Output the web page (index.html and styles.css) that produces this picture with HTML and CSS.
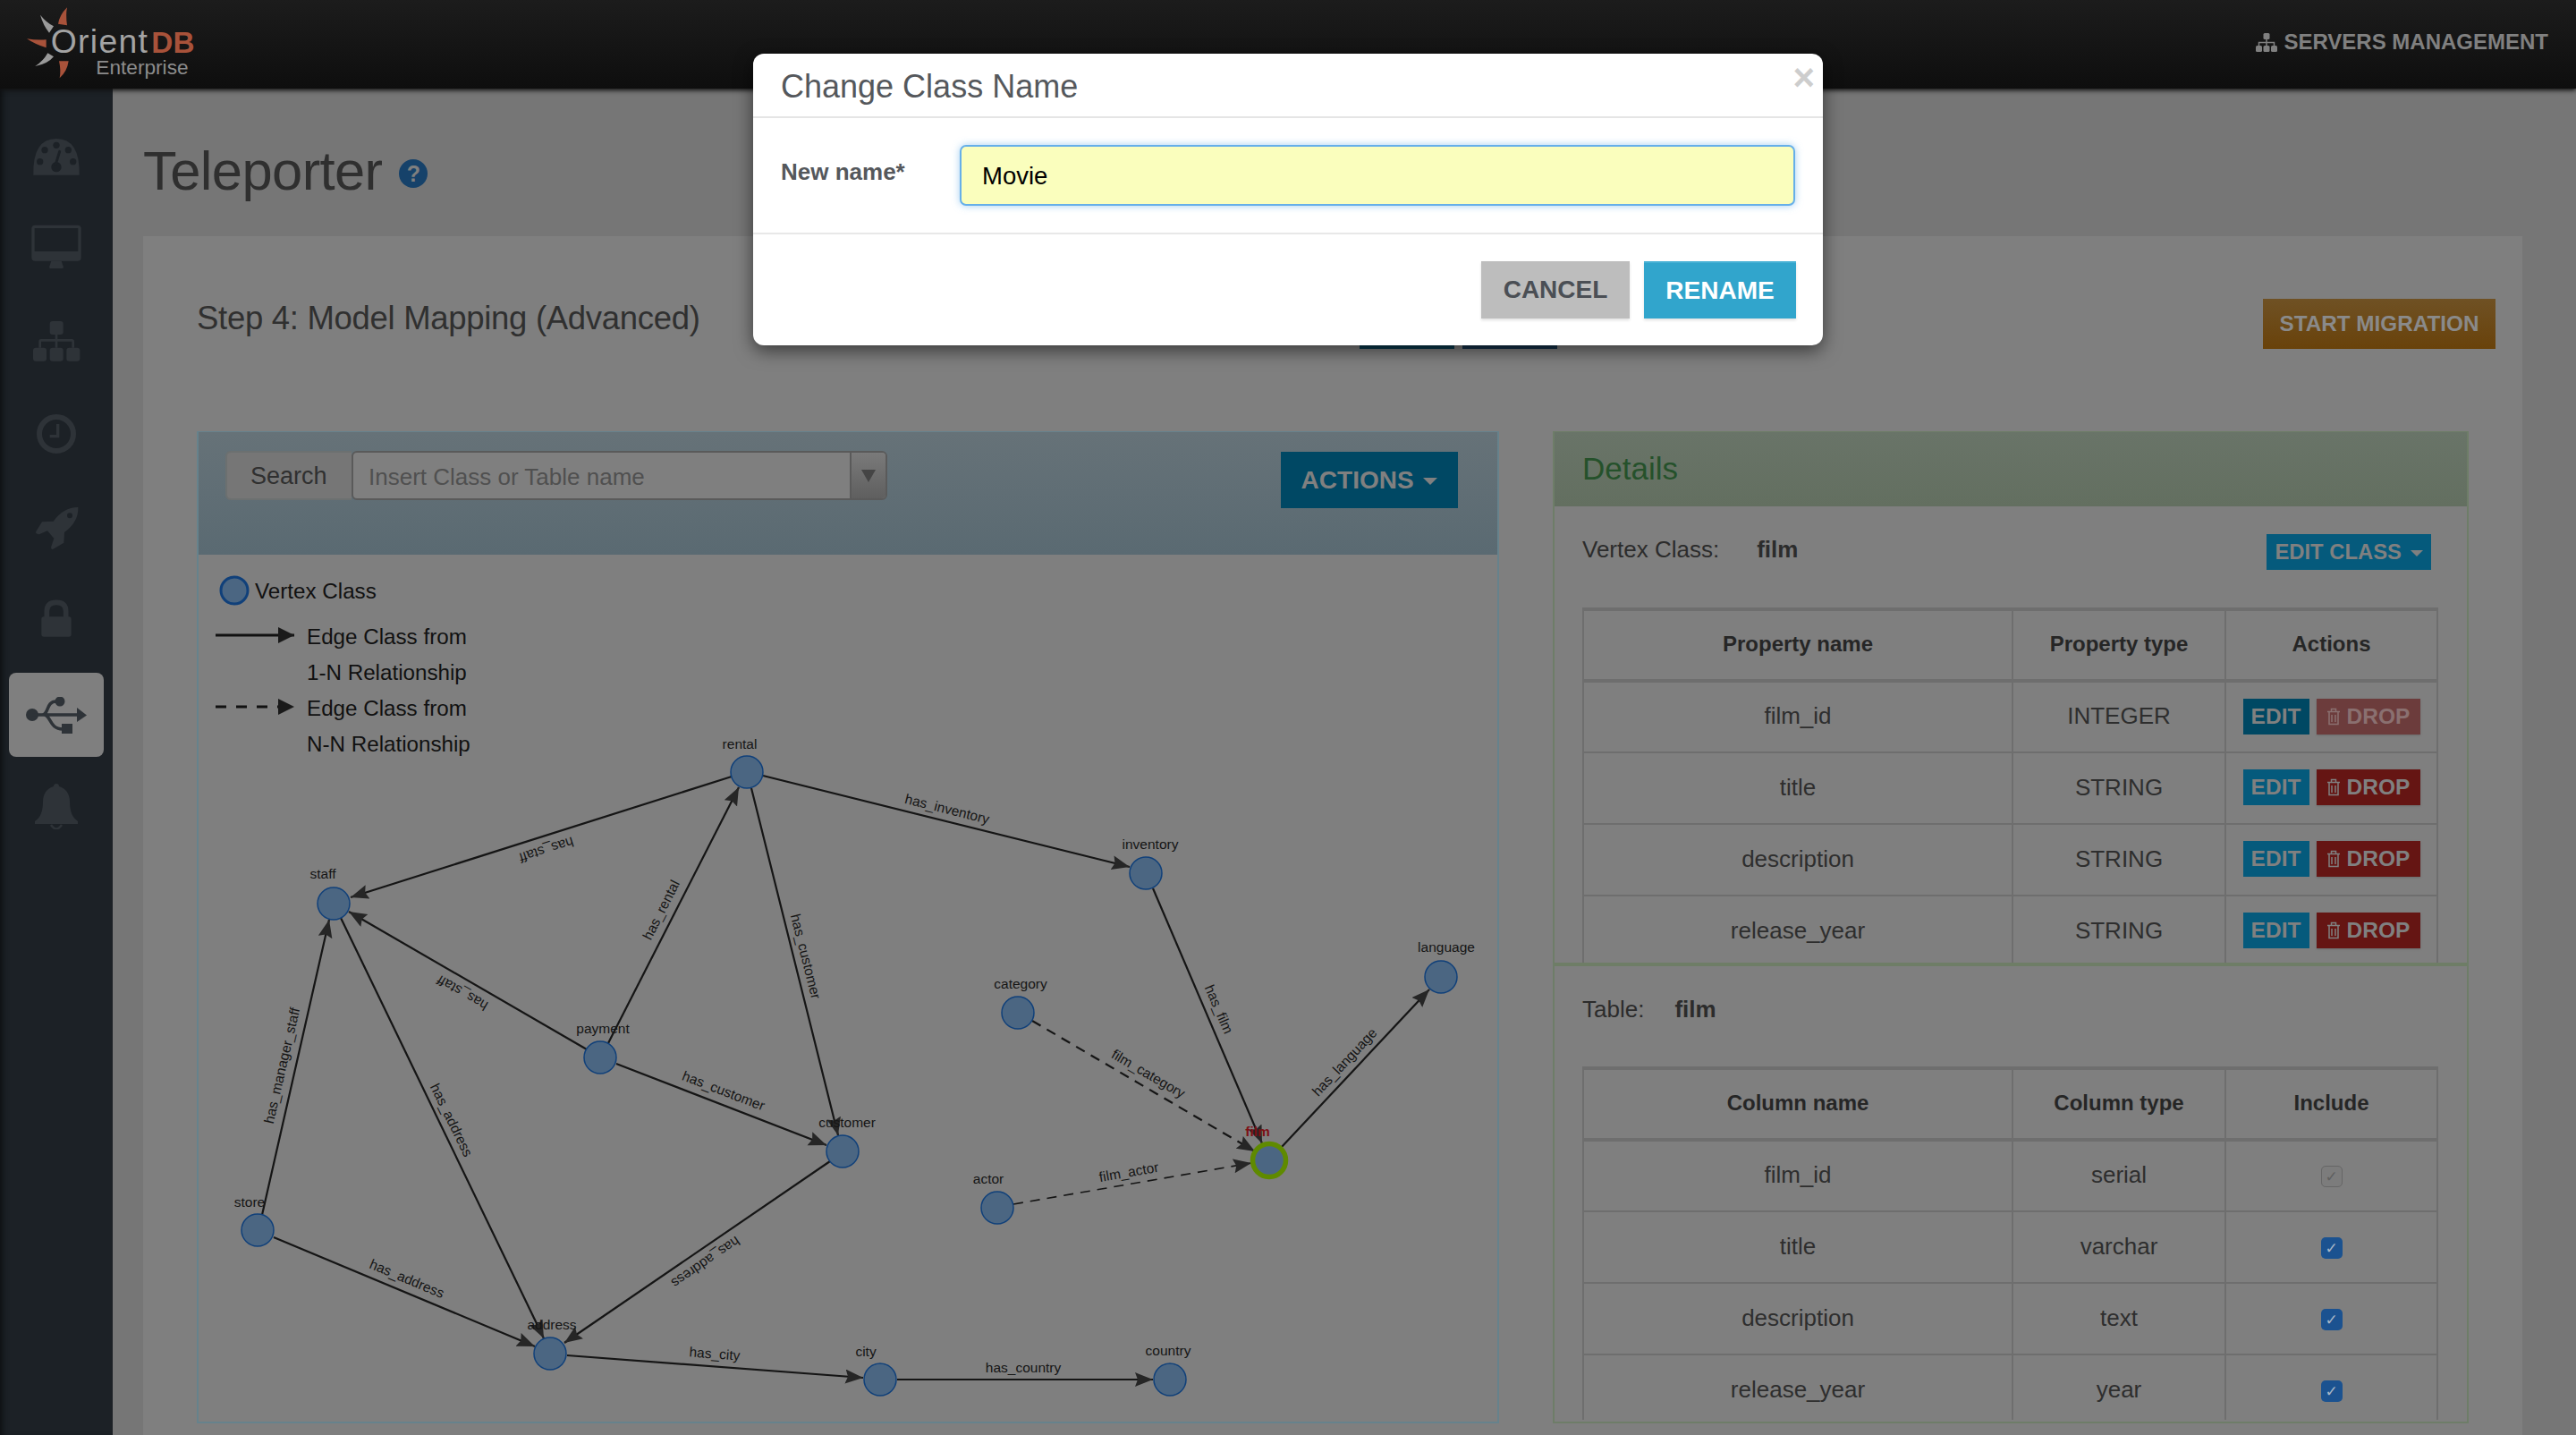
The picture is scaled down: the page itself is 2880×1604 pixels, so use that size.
FILE: index.html
```html
<!DOCTYPE html>
<html lang="en">
<head>
  <meta charset="UTF-8" />
  <title>OrientDB Enterprise - Teleporter</title>
  <link rel="stylesheet" href="styles.css">
</head>
<body>

<header class="topbar">
  <svg class="logo" viewBox="0 0 630 300" width="210" height="100">
    <path class="spoke-o" d="M165 25Q140 50 135 80L165 85Q160 50 165 25Z"/>
    <path class="spoke-w" d="M75 50Q85 85 105 110L120 88Q95 75 75 50Z"/>
    <path class="spoke-o" d="M30 130Q60 150 95 160L95 133Q60 135 30 130Z"/>
    <path class="spoke-w" d="M58 222Q100 215 120 190L100 178Q85 205 58 222Z"/>
    <path class="spoke-o" d="M140 262Q165 240 170 205L138 205Q145 235 140 262Z"/>
    <text class="logo-orient" x="110" y="178">Orient</text>
    <text class="logo-db" x="448" y="178">DB</text>
    <text class="logo-ent" x="262" y="250">Enterprise</text>
  </svg>
  <a class="servers-link">
    <svg viewBox="0 0 24 21" width="24" height="21">
      <rect x="8.500" width="7" height="7" rx="1.500"/><rect y="14" width="7" height="7" rx="1.500"/><rect x="8.500" y="14" width="7" height="7" rx="1.500"/><rect x="17" y="14" width="7" height="7" rx="1.500"/>
      <path d="M12 7v7M3.500 14v-3.500h17V14" fill="none" stroke="#808080" stroke-width="1.500"/>
    </svg>
    SERVERS MANAGEMENT
  </a>
</header>

<div class="layout">
  <nav class="sidebar">
    <a class="nav-item"><svg viewBox="-5 -27 270 270" width="90" height="90">
      <path d="M53 167Q50 45 130 45T207 167Z"/>
      <g class="cut"><circle cx="75" cy="122" r="11"/><circle cx="91" cy="83" r="11"/><circle cx="130" cy="67" r="11"/><circle cx="170" cy="83" r="11"/><circle cx="186" cy="122" r="11"/><circle cx="130" cy="140" r="17"/><path d="M128 130L141 88" stroke="#1c2126" stroke-width="9" stroke-linecap="round"/></g>
    </svg></a>
    <a class="nav-item"><svg viewBox="-5 285 270 270" width="90" height="90">
      <path d="M59 335H201Q213 335 213 347V443Q213 455 201 455H59Q47 455 47 443V347Q47 335 59 335Z"/>
      <rect class="cut" x="57" y="345" width="146" height="78"/>
      <path d="M113 455H147L152 470Q157 480 147 480H113Q103 480 108 470Z"/>
    </svg></a>
    <a class="nav-item"><svg viewBox="-5 597 270 270" width="90" height="90">
      <rect x="108" y="657" width="45" height="45" rx="9"/><rect x="52" y="746" width="45" height="45" rx="9"/><rect x="108" y="746" width="45" height="45" rx="9"/><rect x="164" y="746" width="45" height="45" rx="9"/>
      <path d="M130 702V746M75 746V725Q75 721 79 721H182Q186 721 186 725V746" fill="none" stroke="#2e3338" stroke-width="8"/>
    </svg></a>
    <a class="nav-item"><svg viewBox="-5 -21 270 270" width="90" height="90">
      <circle cx="130" cy="105" r="57" fill="none" stroke="#2e3338" stroke-width="18"/>
      <path d="M135 72V113H108" fill="none" stroke="#2e3338" stroke-width="10"/>
    </svg></a>
    <a class="nav-item"><svg viewBox="-5 291 270 270" width="90" height="90">
      <path d="M203 351Q205 400 157 435L155 470L118 492Q110 490 113 482L122 455L100 430L72 442Q58 440 62 432L82 400L120 398Q155 350 203 351Z"/>
      <circle class="cut" cx="175" cy="379" r="9"/>
    </svg></a>
    <a class="nav-item"><svg viewBox="-5 603 270 270" width="90" height="90">
      <rect x="80" y="718" width="100" height="67" rx="8"/>
      <path d="M98 720V700Q98 670 130 670T162 700V720" fill="none" stroke="#2e3338" stroke-width="17"/>
    </svg></a>
    <a class="nav-item active"><svg viewBox="30 775 68 41" width="68" height="41">
      <circle cx="37" cy="795" r="7"/><circle cx="68" cy="780" r="5.500"/>
      <rect x="70" y="805" width="12" height="11"/>
      <path d="M98 795.500L87 787V803Z"/>
      <path d="M37 795H90M48 795C56 795 52 780 64 780M50 795C58 795 56 811 71 811" fill="none" stroke="#2e3338" stroke-width="3.500"/>
    </svg></a>
    <a class="nav-item bell"><svg viewBox="0 0 48 51" width="48" height="51">
      <path d="M24 0c2 0 3 1 3 3c8 2 12 9 12 17c0 11 3 18 9 22v3H0v-3c6-4 9-11 9-22c0-8 4-15 12-17c0-2 1-3 3-3z"/>
      <path d="M18 46q6 9 12 0" fill="none" stroke="#2e3338" stroke-width="2.500"/>
    </svg></a>
  </nav>

  <main class="content">
    <div class="page-title">
      <h1>Teleporter</h1>
      <span class="help-icon">?</span>
    </div>

    <section class="panel">
      <div class="panel-head">
        <h2>Step 4: Model Mapping (Advanced)</h2>
        <div class="step-buttons">
          <span class="step-btn teal"></span>
          <span class="step-btn navy"></span>
        </div>
        <button class="btn start-btn">START MIGRATION</button>
      </div>

      <div class="columns">
        <!-- graph -->
        <div class="graph-panel">
          <div class="graph-head">
            <div class="search-group">
              <span class="search-addon">Search</span>
              <div class="search-input">
                <span class="placeholder">Insert Class or Table name</span>
                <span class="search-toggle"><i class="caret dark"></i></span>
              </div>
            </div>
            <button class="btn actions-btn">ACTIONS <i class="caret"></i></button>
          </div>

          <svg class="graph" viewBox="222 620 1451 969" width="1451" height="969">
            <defs>
              <marker id="tip" markerUnits="userSpaceOnUse" markerWidth="22" markerHeight="18" refX="20" refY="8" orient="auto">
                <path d="M0 0L20 8L0 16L3 8Z" fill="#262626"/>
              </marker>
              <marker id="tipbig" markerUnits="userSpaceOnUse" markerWidth="20" markerHeight="20" refX="18" refY="9" orient="auto">
                <path d="M0 0L18 9L0 18Z" fill="#1a1a1a"/>
              </marker>
            </defs>

            <!-- legend -->
            <circle class="node legend-node" cx="262" cy="660" r="15"/>
            <text class="legend" x="285" y="669">Vertex Class</text>
            <path class="legend-line" d="M241 710H329" marker-end="url(#tipbig)"/>
            <text class="legend" x="343" y="720">Edge Class from</text>
            <text class="legend" x="343" y="760">1-N Relationship</text>
            <path class="legend-line dash" d="M241 790H329" marker-end="url(#tipbig)"/>
            <text class="legend" x="343" y="800">Edge Class from</text>
            <text class="legend" x="343" y="840">N-N Relationship</text>

            <!-- edges -->
            <g class="edges">
              <path d="M818 868L392 1003" marker-end="url(#tip)"/>
              <path d="M656 1173L390 1019" marker-end="url(#tip)"/>
              <path d="M293 1358L368 1028" marker-end="url(#tip)"/>
              <path d="M381 1026L608 1496" marker-end="url(#tip)"/>
              <path d="M680 1166L826 880" marker-end="url(#tip)"/>
              <path d="M840 881L937 1269" marker-end="url(#tip)"/>
              <path d="M689 1189L924 1280" marker-end="url(#tip)"/>
              <path d="M306 1383L598 1505" marker-end="url(#tip)"/>
              <path d="M928 1298L631 1501" marker-end="url(#tip)"/>
              <path d="M634 1515L965 1540" marker-end="url(#tip)"/>
              <path d="M1003 1542H1289" marker-end="url(#tip)"/>
              <path d="M853 867L1263 969" marker-end="url(#tip)"/>
              <path d="M1289 993L1411 1278" marker-end="url(#tip)"/>
              <path d="M1432 1283L1598 1106" marker-end="url(#tip)"/>
              <path class="dash" d="M1154 1141L1403 1287" marker-end="url(#tip)"/>
              <path class="dash thin" d="M1133 1346L1399 1300" marker-end="url(#tip)"/>
            </g>

            <!-- edge labels -->
            <g class="edge-labels">
              <text transform="translate(611 950) rotate(162.400)">has_staff</text>
              <text transform="translate(517 1110) rotate(210)">has_staff</text>
              <text transform="translate(739 1017) rotate(-63)">has_rental</text>
              <text transform="translate(901 1069) rotate(75.800)">has_customer</text>
              <text transform="translate(315 1191) rotate(-77)">has_manager_staff</text>
              <text transform="translate(505 1252) rotate(64)">has_address</text>
              <text transform="translate(809 1219) rotate(21)">has_customer</text>
              <text transform="translate(455 1429) rotate(22.700)">has_address</text>
              <text transform="translate(789 1411) rotate(145.500)">has_address</text>
              <text transform="translate(799 1513) rotate(4.300)">has_city</text>
              <text transform="translate(1144 1528)">has_country</text>
              <text transform="translate(1059 904) rotate(14)">has_inventory</text>
              <text transform="translate(1363 1128) rotate(66.800)">has_film</text>
              <text transform="translate(1503 1187) rotate(-46.800)">has_language</text>
              <text transform="translate(1284 1200) rotate(30.300)">film_category</text>
              <text transform="translate(1262 1310) rotate(-9.900)">film_actor</text>
            </g>

            <!-- nodes -->
            <circle class="node" cx="835" cy="863" r="18"/>
            <circle class="node" cx="373" cy="1010" r="18"/>
            <circle class="node" cx="671" cy="1182" r="18"/>
            <circle class="node" cx="942" cy="1287" r="18"/>
            <circle class="node" cx="288" cy="1375" r="18"/>
            <circle class="node" cx="615" cy="1513" r="18"/>
            <circle class="node" cx="984" cy="1542" r="18"/>
            <circle class="node" cx="1308" cy="1542" r="18"/>
            <circle class="node" cx="1281" cy="976" r="18"/>
            <circle class="node" cx="1611" cy="1092" r="18"/>
            <circle class="node" cx="1138" cy="1132" r="18"/>
            <circle class="node" cx="1115" cy="1350" r="18"/>
            <circle class="node selected" cx="1419" cy="1297" r="18.500"/>

            <g class="node-labels">
              <text x="827" y="837">rental</text>
              <text x="361" y="982">staff</text>
              <text x="674" y="1155">payment</text>
              <text x="947" y="1260">customer</text>
              <text x="279" y="1349">store</text>
              <text x="617" y="1486">address</text>
              <text x="968" y="1516">city</text>
              <text x="1306" y="1515">country</text>
              <text x="1286" y="949">inventory</text>
              <text x="1617" y="1064">language</text>
              <text x="1141" y="1105">category</text>
              <text x="1105" y="1323">actor</text>
              <text class="selected-label" x="1406" y="1270">film</text>
            </g>
          </svg>
        </div>

        <!-- details -->
        <div class="details-panel">
          <div class="details-head">Details</div>

          <div class="details-section first">
            <div class="details-row">
              <span>Vertex Class:</span><b class="vertex-name">film</b>
              <button class="btn edit-class">EDIT CLASS <i class="caret small"></i></button>
            </div>
            <table class="data-table">
              <thead>
                <tr><th class="col-name">Property name</th><th class="col-type">Property type</th><th>Actions</th></tr>
              </thead>
              <tbody>
                <tr><td>film_id</td><td>INTEGER</td><td class="actions-cell"><button class="btn edit-btn dark">EDIT</button><button class="btn drop-btn off"><svg viewBox="0 0 16 20" width="16" height="20"><path d="M1 4.500h14M5.500 4V1.500h5V4M3 5v13.500h10V5M6 8v8M10 8v8" fill="none" stroke="currentColor" stroke-width="1.500"/></svg>DROP</button></td></tr>
                <tr><td>title</td><td>STRING</td><td class="actions-cell"><button class="btn edit-btn">EDIT</button><button class="btn drop-btn"><svg viewBox="0 0 16 20" width="16" height="20"><path d="M1 4.500h14M5.500 4V1.500h5V4M3 5v13.500h10V5M6 8v8M10 8v8" fill="none" stroke="currentColor" stroke-width="1.500"/></svg>DROP</button></td></tr>
                <tr><td>description</td><td>STRING</td><td class="actions-cell"><button class="btn edit-btn">EDIT</button><button class="btn drop-btn"><svg viewBox="0 0 16 20" width="16" height="20"><path d="M1 4.500h14M5.500 4V1.500h5V4M3 5v13.500h10V5M6 8v8M10 8v8" fill="none" stroke="currentColor" stroke-width="1.500"/></svg>DROP</button></td></tr>
                <tr><td>release_year</td><td>STRING</td><td class="actions-cell"><button class="btn edit-btn">EDIT</button><button class="btn drop-btn"><svg viewBox="0 0 16 20" width="16" height="20"><path d="M1 4.500h14M5.500 4V1.500h5V4M3 5v13.500h10V5M6 8v8M10 8v8" fill="none" stroke="currentColor" stroke-width="1.500"/></svg>DROP</button></td></tr>
              </tbody>
            </table>
          </div>

          <div class="details-section second">
            <div class="details-row">
              <span>Table:</span><b class="table-name">film</b>
            </div>
            <table class="data-table">
              <thead>
                <tr><th class="col-name">Column name</th><th class="col-type">Column type</th><th>Include</th></tr>
              </thead>
              <tbody>
                <tr><td>film_id</td><td>serial</td><td><span class="check off">&#10003;</span></td></tr>
                <tr><td>title</td><td>varchar</td><td><span class="check">&#10003;</span></td></tr>
                <tr><td>description</td><td>text</td><td><span class="check">&#10003;</span></td></tr>
                <tr><td>release_year</td><td>year</td><td><span class="check">&#10003;</span></td></tr>
              </tbody>
            </table>
          </div>
        </div>
      </div>
    </section>
  </main>
</div>

<!-- rename dialog -->
<div class="modal">
  <div class="modal-header">
    <h3>Change Class Name</h3>
    <span class="modal-close">&times;</span>
  </div>
  <div class="modal-body">
    <label for="newName">New name*</label>
    <input id="newName" type="text" value="Movie" />
  </div>
  <div class="modal-footer">
    <button class="btn cancel-btn">CANCEL</button>
    <button class="btn rename-btn">RENAME</button>
  </div>
</div>

</body>
</html>
```

FILE: styles.css
```css
/* Base styles */
* {
  box-sizing: border-box;
}

body {
  margin: 0;
  width: 2880px;
  height: 1604px;
  overflow: hidden;
  position: relative;
  font-family: "Liberation Sans", Arial, sans-serif;
  font-size: 26px;
  color: #2c2c2c;
  background: #767676;
}

h1, h2, h3 {
  margin: 0;
  font-weight: normal;
}

.btn {
  border: none;
  border-radius: 0;
  padding: 0;
  font-family: inherit;
  font-weight: bold;
  cursor: pointer;
}

.caret {
  display: inline-block;
  width: 0;
  height: 0;
  margin-left: 3px;
  vertical-align: middle;
  border-left: 8px solid transparent;
  border-right: 8px solid transparent;
  border-top: 8px solid #808080;
}

.caret.dark {
  margin: 0;
  border-left-width: 8px;
  border-right-width: 8px;
  border-top: 14px solid #454545;
}

.caret.small {
  border-left-width: 7px;
  border-right-width: 7px;
  border-top-width: 7px;
}

/* Top bar */
.topbar {
  position: relative;
  z-index: 2;
  height: 99px;
  padding: 0 31px 5px 20px;
  display: flex;
  align-items: center;
  justify-content: space-between;
  background: linear-gradient(#1c1c1c, #0e0e0e);
  box-shadow: 0 2px 5px #111;
}

.logo {
  flex: none;
  margin-top: 5px;
}

.spoke-o { fill: #a8523a; }
.spoke-w { fill: #9a9a9a; }

.logo-orient {
  font-size: 112px;
  letter-spacing: 4px;
  fill: #a3a3a3;
}

.logo-db {
  font-size: 100px;
  font-weight: bold;
  fill: #a8523a;
}

.logo-ent {
  font-size: 68px;
  fill: #8c8c8c;
}

.servers-link {
  display: flex;
  align-items: center;
  gap: 7px;
  font-size: 24px;
  font-weight: bold;
  color: #808080;
}

.servers-link svg {
  fill: #808080;
}

/* Sidebar */
.layout {
  display: flex;
  height: 1505px;
}

.sidebar {
  flex: none;
  width: 126px;
  padding-top: 25px;
  background: #1c2126;
  box-shadow: inset 7px 0 6px -4px #0e1013;
}

.nav-item {
  height: 104px;
  display: flex;
  align-items: center;
  justify-content: center;
}

.nav-item svg {
  fill: #2e3338;
}

.nav-item .cut {
  fill: #1c2126;
}

.nav-item.active {
  height: 94px;
  margin: 4px 10px 6px;
  border-radius: 8px;
  background: #7f7f7f;
}

.nav-item.bell {
  padding-bottom: 6px;
}

/* Main area */
.content {
  flex: 1;
  min-width: 0;
  padding: 0 60px 0 34px;
}

.page-title {
  height: 165px;
  padding-top: 17px;
  display: flex;
  align-items: center;
  gap: 19px;
}

h1 {
  font-size: 61.500px;
  letter-spacing: -0.6px;
  color: #2f2f2f;
}

.help-icon {
  width: 32px;
  height: 32px;
  margin-top: 8px;
  border-radius: 50%;
  background: #16426a;
  color: #7f7f7f;
  font-size: 25px;
  font-weight: bold;
  line-height: 32px;
  text-align: center;
}

.panel {
  height: 1340px;
  padding: 70px 60px 0;
  background: #7f7f7f;
}

.panel-head {
  height: 56px;
  margin-bottom: 92px;
  display: flex;
  align-items: center;
}

h2 {
  width: 1300px;
  margin-bottom: 12px;
  font-size: 36.500px;
  letter-spacing: -0.3px;
  color: #303030;
}

.step-buttons {
  display: flex;
  gap: 9px;
  height: 56px;
}

.step-btn {
  width: 106px;
}

.step-btn.teal { background: #0a3a4d; }
.step-btn.navy { background: #15324a; }

.start-btn {
  width: 260px;
  height: 56px;
  margin-left: auto;
  margin-right: -30px;
  font-size: 24.300px;
  color: #8a8a8a;
  background: linear-gradient(#6f5124, #69420a);
}

.columns {
  display: flex;
  justify-content: space-between;
}

/* Graph panel */
.graph-panel {
  width: 1456px;
  height: 1109px;
  border: 2px solid #66828c;
  border-top-width: 1px;
}

.graph-head {
  height: 137px;
  padding: 21px 44px 0 30px;
  display: flex;
  justify-content: space-between;
  align-items: flex-start;
  background: linear-gradient(#667278, #5a6a72);
}

.search-group {
  display: flex;
  height: 55px;
  margin-top: 0;
}

.search-addon {
  width: 141px;
  padding-left: 26px;
  line-height: 53px;
  font-size: 27px;
  color: #303030;
  background: #767676;
  border: 2px solid #6c7070;
  border-right: none;
  border-radius: 6px 0 0 6px;
}

.search-input {
  width: 599px;
  display: flex;
  justify-content: space-between;
  background: #7f7f7f;
  border: 2px solid #5a5a5a;
  border-radius: 6px;
  overflow: hidden;
}

.placeholder {
  padding-left: 17px;
  line-height: 54px;
  font-size: 26px;
  color: #505050;
}

.search-toggle {
  width: 40px;
  display: flex;
  align-items: center;
  justify-content: center;
  background: linear-gradient(#7a7a7a, #5f5f5f);
  border-left: 2px solid #5a5a5a;
}

.actions-btn {
  width: 198px;
  height: 63px;
  margin-top: 1px;
  font-size: 28px;
  color: #808080;
  background: #004864;
}

.graph {
  display: block;
  font-family: "Liberation Sans", Arial, sans-serif;
}

.node {
  fill: #4b6682;
  stroke: #10407a;
  stroke-width: 1.500;
}

.legend-node {
  stroke-width: 3;
}

.node.selected {
  stroke: #5f8a00;
  stroke-width: 5.500;
}

.legend {
  font-size: 24.200px;
  fill: #111;
}

.legend-line {
  stroke: #111;
  stroke-width: 3;
  fill: none;
}

.legend-line.dash {
  stroke-dasharray: 12 11;
}

.edges path {
  stroke: #151515;
  stroke-width: 2.200;
  fill: none;
}

.edges .dash {
  stroke-dasharray: 11 8;
}

.edges .thin {
  stroke-width: 1.600;
}

.edge-labels text {
  font-size: 15.500px;
  fill: #151515;
  text-anchor: middle;
  dominant-baseline: central;
}

.node-labels text {
  font-size: 15.500px;
  fill: #151515;
  text-anchor: middle;
}

.node-labels .selected-label {
  font-weight: bold;
  fill: #7d0f14;
}

/* Details panel */
.details-panel {
  width: 1024px;
  height: 1109px;
  border: 2px solid #6e7d68;
  border-top-width: 1px;
}

.details-head {
  height: 83px;
  padding-left: 31px;
  line-height: 81px;
  font-size: 35px;
  color: #25512b;
  background: linear-gradient(#697468, #636f60);
}

.details-section {
  padding: 0 35px 0 31px;
  overflow: hidden;
}

.details-section.first {
  height: 510px;
}

.details-section.second {
  height: 511px;
  border-top: 4px solid #6e7d66;
}

.details-row {
  display: flex;
  align-items: center;
}

.first .details-row {
  height: 113px;
  padding-bottom: 16px;
}

.second .details-row {
  height: 112px;
  padding-bottom: 16px;
}

.vertex-name { margin-left: 42px; }
.table-name { margin-left: 34px; }

.edit-class {
  width: 184px;
  height: 40px;
  margin-left: auto;
  margin-right: 5px;
  margin-top: 5px;
  font-size: 23.800px;
  color: #808080;
  background: #055a7c;
}

.data-table {
  width: 957px;
  border-collapse: collapse;
  table-layout: fixed;
  text-align: center;
}

.data-table th {
  height: 80px;
  padding: 0 0 3px;
  font-size: 24px;
  color: #262626;
  border: 2px solid #6e6e6e;
  border-top-width: 4px;
  border-bottom-width: 4px;
}

.data-table td {
  height: 80px;
  padding: 0 0 2px;
  border: 2px solid #6e6e6e;
  color: #2e2e2e;
}

.col-name { width: 480px; }
.col-type { width: 238px; }

.actions-cell {
  white-space: nowrap;
}

.edit-btn, .drop-btn {
  height: 40px;
  font-size: 24.500px;
  color: #808080;
  vertical-align: middle;
}

.edit-btn {
  width: 74px;
  margin-right: 8px;
  background: #055a7c;
}

.edit-btn.dark {
  background: #004863;
}

.drop-btn {
  width: 116px;
  display: inline-flex;
  align-items: center;
  justify-content: center;
  gap: 7px;
  background: #651513;
  box-shadow: 0 1px 2px #6a6a6a;
}

.drop-btn.off {
  background: #6c3c3c;
  color: #8a7070;
}

.check {
  display: inline-block;
  width: 24px;
  height: 24px;
  border-radius: 5px;
  background: #1b5290;
  color: #a8b8c8;
  font-family: "DejaVu Sans", sans-serif;
  font-size: 17px;
  line-height: 24px;
  vertical-align: middle;
}

.check.off {
  background: #7c7c7c;
  border: 1px solid #666;
  color: #5f5f5f;
  line-height: 22px;
}

/* Rename dialog */
.modal {
  position: absolute;
  left: 842px;
  top: 60px;
  z-index: 10;
  width: 1196px;
  height: 326px;
  border-radius: 12px;
  background: #fff;
  box-shadow: 0 6px 20px rgba(0, 0, 0, 0.55);
}

.modal-header {
  position: relative;
  height: 72px;
  padding: 16px 31px 0;
  border-bottom: 2px solid #e5e5e5;
}

.modal-header h3 {
  font-size: 36px;
  line-height: 42px;
  color: #55585c;
}

.modal-close {
  position: absolute;
  right: 9px;
  top: 4px;
  font-size: 42px;
  font-weight: bold;
  line-height: 46px;
  color: #cdcdcd;
}

.modal-body {
  height: 130px;
  padding: 30px 31px 0;
  display: flex;
  align-items: flex-start;
  border-bottom: 2px solid #e8e8e8;
}

.modal-body label {
  width: 200px;
  padding-top: 15px;
  font-size: 26px;
  font-weight: bold;
  color: #55585c;
}

.modal-body input {
  width: 934px;
  height: 68px;
  padding: 2px 23px 0;
  font-family: inherit;
  font-size: 27.500px;
  color: #000;
  background: #fafebd;
  border: 2px solid #66afe9;
  border-radius: 7px;
  outline: none;
  box-shadow: 0 0 9px rgba(102, 175, 233, 0.6);
}

.modal-footer {
  padding: 30px 30px 0 0;
  display: flex;
  justify-content: flex-end;
  gap: 16px;
}

.cancel-btn, .rename-btn {
  height: 64px;
  font-size: 28px;
  box-shadow: 0 2px 3px rgba(0, 0, 0, 0.12);
}

.cancel-btn {
  width: 166px;
  color: #4b4f55;
  background: #bdbdbd;
}

.rename-btn {
  width: 170px;
  color: #fff;
  background: #31a5cc;
  border-top: 2px solid #45b0d4;
}
```
